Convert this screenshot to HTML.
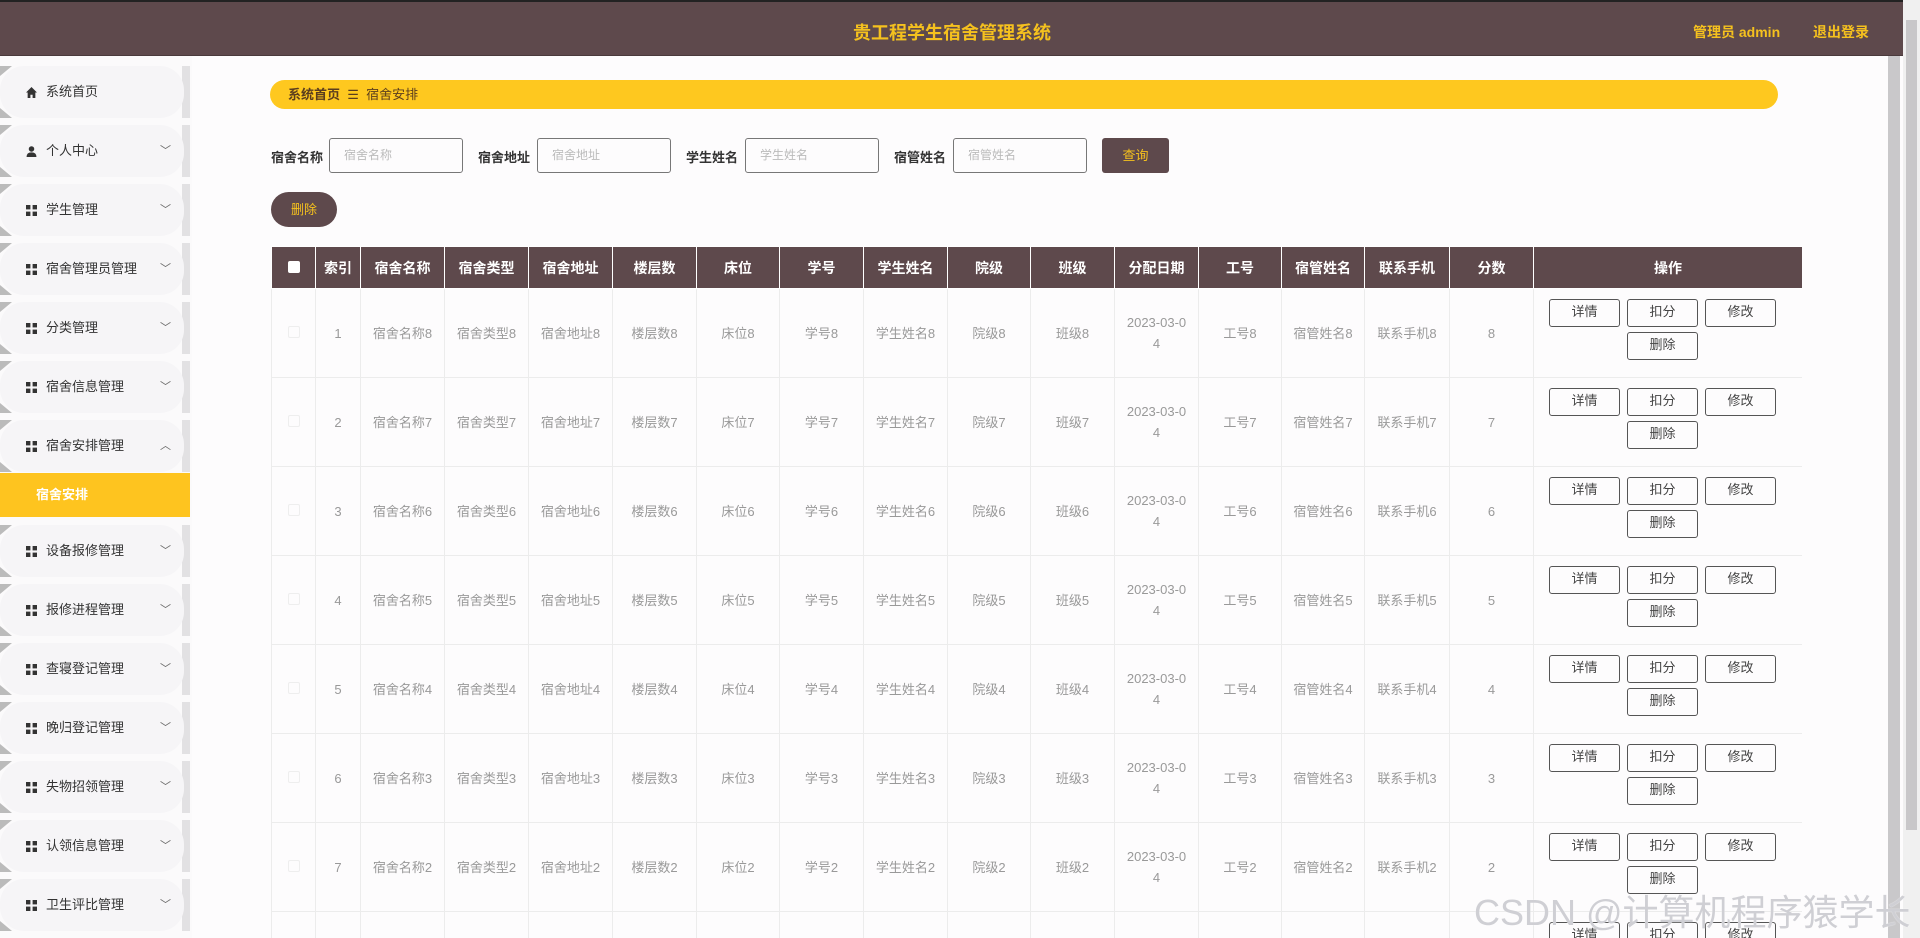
<!DOCTYPE html>
<html style="width:1920px;height:938px;overflow:hidden"><head><meta charset="utf-8"><style>
*{margin:0;padding:0;box-sizing:border-box}
body{width:1920px;height:938px;overflow:hidden;background:#fdfcfd;font-family:"Liberation Sans","Noto Sans CJK SC",sans-serif;position:relative}
.top{position:absolute;left:0;top:0;width:1904px;height:56px;background:#5e494c;border-top:2px solid #222;border-bottom:1px solid #4a3a3c}
.title{position:absolute;left:0;width:1904px;top:17px;text-align:center;color:#f5c11e;font-size:18px;font-weight:bold}
.tr{position:absolute;top:20px;color:#f5c11e;font-size:14px;font-weight:bold}
.sb1{position:absolute;right:0;top:0;width:17px;height:938px;background:#f0f0f0}
.sb1 div{position:absolute;left:3px;top:20px;width:11px;height:810px;background:#c8c7c9}
.sb2{position:absolute;left:1888px;top:56px;width:12px;height:882px;background:#c9c8ca}
.side{position:absolute;left:0;top:56px;width:192px;height:882px;background:#fbfafb}
.it{position:absolute;left:0;width:184px;height:52px;background:#f6f5f7;border-radius:24px;font-size:13px;color:#333;line-height:52px;padding-left:46px}
.tl{position:absolute;left:0;border-left:12px solid #bbb;border-bottom:10px solid transparent}
.bl{position:absolute;left:0;border-left:12px solid #bbb;border-top:10px solid transparent}
.edge{position:absolute;left:182px;width:8px;height:52px;background:#e2e1e3}
.ic{position:absolute;left:26px;top:21px;width:11px;height:11px}
.ar{position:absolute;left:160px;top:0;color:#666;font-size:11px}
.sel{position:absolute;left:0;top:473px;width:190px;height:44px;background:#fec41f;color:#fff;font-size:13px;font-weight:bold;line-height:44px;padding-left:36px}
.bc{position:absolute;left:270px;top:80px;width:1508px;height:29px;background:#fec81f;border-radius:15px;font-size:13px;line-height:29px;padding-left:18px;color:#5a3d1e}
.lab{position:absolute;top:147px;font-size:13px;color:#333;font-weight:bold}
.inp{position:absolute;top:138px;width:134px;height:35px;border:1px solid #777;border-radius:3px;font-size:12px;color:#bbb;line-height:33px;padding-left:14px}
.qb{position:absolute;left:1102px;top:138px;width:67px;height:35px;background:#5e494c;border-radius:3px;color:#f5c11e;font-size:13px;text-align:center;line-height:35px}
.db{position:absolute;left:271px;top:192px;width:66px;height:35px;background:#5e494c;border-radius:18px;color:#f5c11e;font-size:13px;text-align:center;line-height:35px}
.tw{position:absolute;left:271px;top:246px;width:1531px;height:692px;overflow:hidden}
table{width:1531px;border-collapse:collapse;table-layout:fixed}
th{background:#5e494c;color:#fff;font-size:14px;height:42px;border:1px solid #fff;font-weight:bold}
td{border:1px solid #ececec;height:89px;text-align:center;color:#999;font-size:13px;line-height:21px;vertical-align:middle}
.ops{vertical-align:top;padding-top:10px;text-align:left;padding-left:15px}
.b{display:inline-block;width:71px;height:28px;border:1px solid #555;border-radius:3px;color:#444;font-size:13px;text-align:center;line-height:24px;margin-right:7px;vertical-align:top}
.cb{display:inline-block;width:12px;height:12px;border:1px solid #eee;border-radius:2px}
.wm{position:absolute;left:1474px;top:884px;font-size:36px;color:#cfcfd4;white-space:nowrap;text-shadow:0 0 1px #fff}
</style></head><body>
<div class="top"><div class="title">贵工程学生宿舍管理系统</div>
<div class="tr" style="left:1693px">管理员 admin</div><div class="tr" style="left:1813px">退出登录</div></div>
<div class="sb2"></div><div class="sb1"><div></div></div>
<div class="side"></div>
<div id="menu"></div>
<div class="sel">宿舍安排</div>
<div class="bc"><b>系统首页</b> &nbsp;☰&nbsp; 宿舍安排</div>
<div class="lab" style="left:271px">宿舍名称</div><div class="inp" style="left:329px">宿舍名称</div>
<div class="lab" style="left:478px">宿舍地址</div><div class="inp" style="left:537px">宿舍地址</div>
<div class="lab" style="left:686px">学生姓名</div><div class="inp" style="left:745px">学生姓名</div>
<div class="lab" style="left:894px">宿管姓名</div><div class="inp" style="left:953px">宿管姓名</div>
<div class="qb">查询</div><div class="db">删除</div>
<div class="tw"><table id="t"><colgroup>
<col style="width:44px"><col style="width:45px"><col style="width:84px"><col style="width:84px"><col style="width:84px"><col style="width:84px"><col style="width:83px"><col style="width:84px"><col style="width:84px"><col style="width:83px"><col style="width:84px"><col style="width:84px"><col style="width:83px"><col style="width:83px"><col style="width:85px"><col style="width:84px"><col style="width:269px"></colgroup>
<tr><th><span style="display:inline-block;width:12px;height:12px;background:#fff;border-radius:2px"></span></th><th>索引</th><th>宿舍名称</th><th>宿舍类型</th><th>宿舍地址</th><th>楼层数</th><th>床位</th><th>学号</th><th>学生姓名</th><th>院级</th><th>班级</th><th>分配日期</th><th>工号</th><th>宿管姓名</th><th>联系手机</th><th>分数</th><th>操作</th></tr>
</table></div>
<div class="wm">CSDN @计算机程序猿学长</div>
<script>
var names=[["系统首页",0],["个人中心",1],["学生管理",1],["宿舍管理员管理",1],["分类管理",1],["宿舍信息管理",1],["宿舍安排管理",2],["设备报修管理",1],["报修进程管理",1],["查寝登记管理",1],["晚归登记管理",1],["失物招领管理",1],["认领信息管理",1],["卫生评比管理",1]];
var h="";
names.forEach(function(n,i){var top=i<7?66+i*59:525+(i-7)*59;
var icon=i==0?'<path d="M5 0L10 5H8.5V10H6V7H4V10H1.5V5H0Z" fill="#333"/>':i==1?'<circle cx="5" cy="2.7" r="2.5" fill="#333"/><path d="M0.5 10Q0.5 5.8 5 5.8Q9.5 5.8 9.5 10Z" fill="#333"/>':'<rect x="0" y="0" width="4" height="4" fill="#333"/><rect x="6" y="0" width="4" height="4" fill="#333"/><rect x="0" y="6" width="4" height="4" fill="#333"/><rect x="6" y="6" width="4" height="4" fill="#333"/>';
h+='<div class="edge" style="top:'+top+'px"></div><div class="it" style="top:'+top+'px"><svg class="ic" viewBox="0 0 10 10">'+icon+'</svg>'+n[0]+(n[1]?'<span class="ar">'+(n[1]==2?'︿':'﹀')+'</span>':'')+'</div><div class="tl" style="top:'+top+'px"></div><div class="bl" style="top:'+(top+42)+'px"></div>';});
document.getElementById("menu").innerHTML=h;
var r="";
for(var i=1;i<=8;i++){var k=9-i;
r+='<tr><td><span class="cb"></span></td><td>'+i+'</td><td>宿舍名称'+k+'</td><td>宿舍类型'+k+'</td><td>宿舍地址'+k+'</td><td>楼层数'+k+'</td><td>床位'+k+'</td><td>学号'+k+'</td><td>学生姓名'+k+'</td><td>院级'+k+'</td><td>班级'+k+'</td><td>2023-03-0<br>4</td><td>工号'+k+'</td><td>宿管姓名'+k+'</td><td>联系手机'+k+'</td><td>'+k+'</td><td class="ops"><span class="b">详情</span><span class="b">扣分</span><span class="b">修改</span><br><span class="b" style="margin-left:78px;margin-top:5px">删除</span></td></tr>';}
document.getElementById("t").insertAdjacentHTML("beforeend",r);
</script>
</body></html>
